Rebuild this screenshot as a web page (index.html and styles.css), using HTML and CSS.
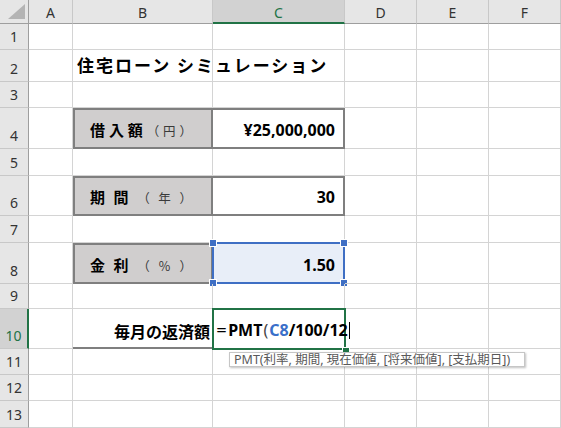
FILE: index.html
```html
<!DOCTYPE html>
<html lang="ja">
<head>
<meta charset="utf-8">
<title>住宅ローン シミュレーション</title>
<link rel="stylesheet" href="styles.css">
</head>
<body>
<div class="sheet">
  <div class="corner"><span class="tri"></span></div>
  <div class="hc">A</div>
  <div class="hc">B</div>
  <div class="hc sel">C</div>
  <div class="hc">D</div>
  <div class="hc">E</div>
  <div class="hc">F</div>

  <div class="rh">1</div>
  <div class="c"></div><div class="c"></div><div class="c"></div><div class="c"></div><div class="c"></div><div class="c"></div>

  <div class="rh">2</div>
  <div class="c"></div>
  <div class="c title">住宅ローン シミュレーション</div>
  <div class="c"></div><div class="c"></div><div class="c"></div><div class="c"></div>

  <div class="rh">3</div>
  <div class="c"></div><div class="c"></div><div class="c"></div><div class="c"></div><div class="c"></div><div class="c"></div>

  <div class="rh">4</div>
  <div class="c"></div>
  <div class="c lbl"><span class="b">借</span><span class="b">入</span><span class="b">額</span><span class="s">（</span><span class="s">円</span><span class="s">）</span></div>
  <div class="c val">¥25,000,000</div>
  <div class="c"></div><div class="c"></div><div class="c"></div>

  <div class="rh">5</div>
  <div class="c"></div><div class="c"></div><div class="c"></div><div class="c"></div><div class="c"></div><div class="c"></div>

  <div class="rh">6</div>
  <div class="c"></div>
  <div class="c lbl"><span class="b">期</span><span class="b">間</span><span class="s">（</span><span class="s">年</span><span class="s">）</span></div>
  <div class="c val">30</div>
  <div class="c"></div><div class="c"></div><div class="c"></div>

  <div class="rh">7</div>
  <div class="c"></div><div class="c"></div><div class="c"></div><div class="c"></div><div class="c"></div><div class="c"></div>

  <div class="rh">8</div>
  <div class="c"></div>
  <div class="c lbl"><span class="b">金</span><span class="b">利</span><span class="s">（</span><span class="s">％</span><span class="s">）</span></div>
  <div class="c val ref">1.50<span class="h tl"></span><span class="h tr"></span><span class="h bl"></span><span class="h br"></span></div>
  <div class="c"></div><div class="c"></div><div class="c"></div>

  <div class="rh">9</div>
  <div class="c"></div><div class="c"></div><div class="c"></div><div class="c"></div><div class="c"></div><div class="c"></div>

  <div class="rh sel">10</div>
  <div class="c"></div>
  <div class="c total">毎月の返済額</div>
  <div class="c edit">
    <span class="eq">=</span><span class="fn">PMT</span><span class="par">(</span><span class="rf">C8</span><span class="fn">/100/12</span><span class="caret"></span>
    <span class="fill"></span>
    <div class="tip">PMT(利率, 期間, 現在価値, [将来価値], [支払期日])</div>
  </div>
  <div class="c"></div><div class="c"></div><div class="c"></div>

  <div class="rh">11</div>
  <div class="c"></div><div class="c"></div><div class="c"></div><div class="c"></div><div class="c"></div><div class="c"></div>

  <div class="rh">12</div>
  <div class="c"></div><div class="c"></div><div class="c"></div><div class="c"></div><div class="c"></div><div class="c"></div>

  <div class="rh">13</div>
  <div class="c"></div><div class="c"></div><div class="c"></div><div class="c"></div><div class="c"></div><div class="c"></div>
</div>
</body>
</html>
```
FILE: styles.css
```css
* { box-sizing: border-box; }
html, body { margin: 0; padding: 0; background: #fff; overflow: hidden; }
body { font-family: "Noto Sans", "Noto Sans CJK JP", sans-serif; color: #000; }

.sheet {
  display: grid;
  grid-template-columns: 29px 44px 140px 132px 72px 72px 72px;
  grid-template-rows: 24px 26px 32px 26px 41px 27px 40px 27px 41px 25px 40px 26px 26px 27px;
  width: 561px;
  height: 428px;
}

.corner {
  background: #e6e6e6;
  border-right: 1px solid #9e9e9e;
  border-bottom: 1px solid #9e9e9e;
  position: relative;
}
.tri {
  position: absolute;
  right: 3px;
  bottom: 4px;
  width: 0;
  height: 0;
  border-left: 17px solid transparent;
  border-bottom: 15px solid #b4b4b4;
}

.hc {
  background: #e6e6e6;
  border-right: 1px solid #c8c8c8;
  border-bottom: 1px solid #9e9e9e;
  display: flex;
  align-items: center;
  justify-content: center;
  font-size: 14px;
  color: #333;
  padding-top: 1px;
}
.hc.sel {
  background: #d2d2d2;
  color: #217346;
  border-bottom: 2px solid #217346;
  padding-top: 2px;
}

.rh {
  background: #e6e6e6;
  border-right: 1px solid #9e9e9e;
  border-bottom: 1px solid #c8c8c8;
  display: flex;
  align-items: flex-end;
  justify-content: center;
  font-size: 14px;
  line-height: 18px;
  padding-bottom: 3px;
  color: #333;
}
.rh.sel {
  background: #d2d2d2;
  color: #217346;
  border-right: 2px solid #217346;
}

.c {
  border-right: 1px solid #d4d4d4;
  border-bottom: 1px solid #d4d4d4;
  position: relative;
  min-width: 0;
}

.title {
  display: flex;
  align-items: flex-end;
  padding-left: 4px;
  padding-bottom: 5px;
  white-space: pre;
  font-family: "Noto Sans CJK JP", sans-serif;
  font-weight: 700;
  font-size: 17px;
  line-height: 22px;
  letter-spacing: 2px;
}

.lbl {
  background: #d0cece;
  border: 2px solid #7f7f7f;
  display: flex;
  align-items: flex-end;
  justify-content: space-between;
  padding: 0 19px 7px 15px;
  font-family: "Noto Sans CJK JP", sans-serif;
  line-height: 20px;
}
.lbl .b { font-weight: 700; font-size: 15px; }
.lbl .s { font-size: 12.5px; color: #3a3a3a; line-height: 19px; }

.val {
  border-top: 2px solid #7f7f7f;
  border-right: 2px solid #7f7f7f;
  border-bottom: 2px solid #7f7f7f;
  display: flex;
  align-items: flex-end;
  justify-content: flex-end;
  padding: 0 8px 7px 0;
  font-weight: 700;
  font-size: 16px;
  line-height: 20px;
}

.ref {
  background: #e8eef8;
  border: 2px solid #3f6fc4;
  margin: -1px 0 0 -1px;
  padding-right: 8px;
}
.h {
  position: absolute;
  width: 6px;
  height: 6px;
  background: #3f6fc4;
  outline: 1px solid #fff;
}
.h.tl { top: -4px; left: -4px; }
.h.tr { top: -4px; right: -4px; }
.h.bl { bottom: -4px; left: -4px; }
.h.br { bottom: -4px; right: -4px; }

.total {
  border-bottom: 2px solid #7f7f7f;
  display: flex;
  align-items: flex-end;
  justify-content: flex-end;
  padding: 0 2px 5px 0;
  font-family: "Noto Sans CJK JP", sans-serif;
  font-weight: 700;
  font-size: 16px;
  line-height: 22px;
  white-space: nowrap;
}

.edit {
  border: 2px solid #217346;
  margin: -1px -1px -1px -1px;
  display: flex;
  align-items: flex-end;
  padding: 0 0 7px 3px;
  white-space: nowrap;
  font-size: 16px;
  line-height: 22px;
  z-index: 1;
}
.eq { font-weight: 400; margin-right: 2px; transform: scaleX(1.15); }
.fn { font-weight: 700; }
.par { font-weight: 400; color: #444; margin: 0 1px; }
.rf { font-weight: 700; color: #3a6fc9; }
.caret {
  display: inline-block;
  width: 1px;
  height: 17px;
  background: #000;
  margin: 0 0 2px 1px;
  flex: none;
}
.fill {
  position: absolute;
  right: -5px;
  bottom: -6px;
  width: 6px;
  height: 6px;
  background: #217346;
  outline: 1px solid #fff;
}
.tip {
  position: absolute;
  left: 15px;
  top: 42px;
  width: 296px;
  height: 15px;
  background: #fff;
  border: 1px solid #c6c6c6;
  box-shadow: 1px 1px 2px rgba(0, 0, 0, 0.25);
  padding: 0 0 0 4px;
  font-family: "Noto Sans", "Noto Sans CJK JP", sans-serif;
  font-size: 12.5px;
  line-height: 13px;
  color: #595959;
  white-space: nowrap;
  z-index: 2;
}
```
